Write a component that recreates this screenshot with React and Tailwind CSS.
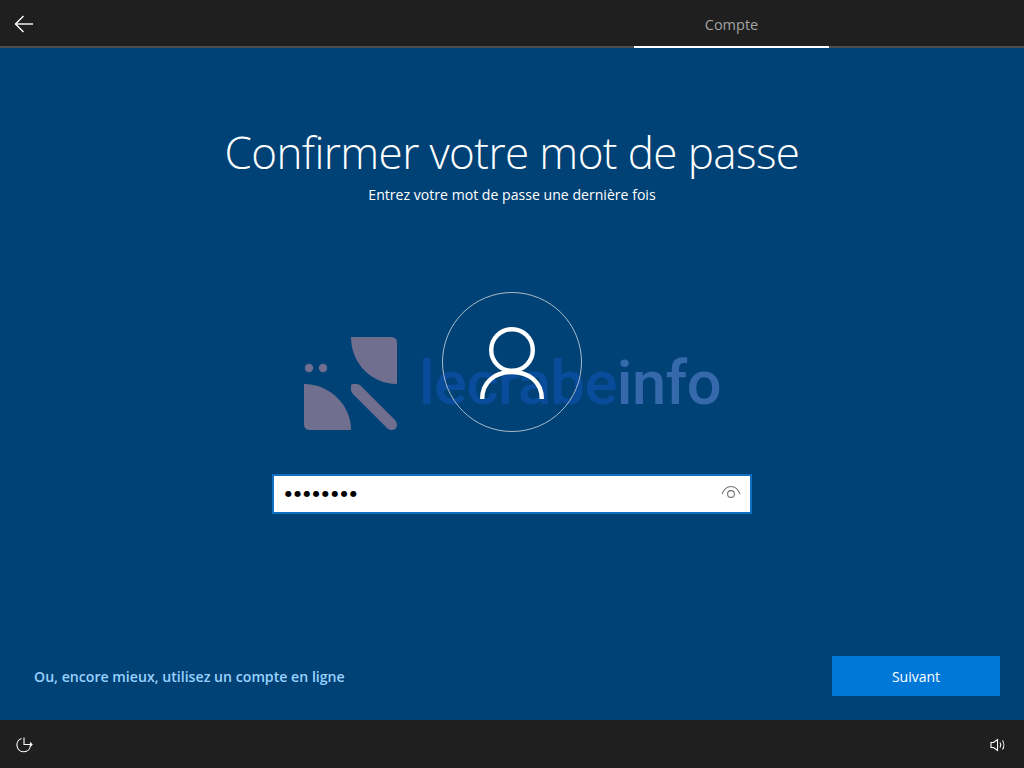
import { useState } from 'react'

const sans = 'font-["Open_Sans","Noto_Sans",sans-serif]'

// ── Watermark behind the page content ───────────────────────────────────────
function Watermark() {
  return (
    <div className="absolute left-[304px] top-[337px] flex items-center pointer-events-none">
      <svg width="94" height="94" viewBox="0 0 94 94" fill="#716f8f">
        <path d="M47 0H87Q93 0 93 6V47C67 47 47 26 47 0Z" />
        <path d="M0 47C26 47 47 68 47 93H6Q0 93 0 87Z" />
        <circle cx="5" cy="31" r="4.2" />
        <circle cx="19" cy="31" r="4.2" />
        <path d="M47 49Q47 47 49 47H53Q55 47 57 49L91 83Q93 85 93 88Q93 93 87 93Q85 93 83 91L49 57Q47 55 47 53Z" />
      </svg>
      <div className='ml-[21px] text-[61.5px] leading-none font-medium tracking-[-0.6px] font-["Roboto",sans-serif]'>
        <span className="text-[#0a4c9c]">lecrabe</span>
        <span className="text-[#3669ac]">info</span>
      </div>
    </div>
  )
}

function UserAvatar() {
  return (
    <div className="w-[140px] h-[140px] rounded-full border border-[#a9bccb] flex items-center justify-center">
      <svg width="64" height="72" viewBox="0 0 64 72" fill="none" stroke="#fff" strokeWidth="4.4" className="mt-[2px]">
        <circle cx="32" cy="23" r="20.8" />
        <path d="M2.2 72C2.2 55 15 45 32 45S61.8 55 61.8 72" />
      </svg>
    </div>
  )
}

function PasswordBox() {
  const [shown, setShown] = useState(false)

  return (
    <div className="w-[480px] h-[40px] bg-white border-2 border-[#0f6fc0] flex items-center justify-between pl-[11px] pr-[9px]">
      <span className='text-[8px] leading-none tracking-[2.3px] text-black font-["DejaVu_Sans",sans-serif]'>
        {shown ? 'motdepas' : '●●●●●●●●'}
      </span>
      <button onClick={() => setShown(s => !s)} className="mb-[5px]">
        <svg width="20" height="14" viewBox="0 0 20 14" fill="none" stroke="#707070" strokeWidth="1.1" className="block">
          <path d="M1 9C3 4 6 1.5 10 1.5C14 1.5 17 4 19 9" />
          <circle cx="10" cy="9" r="3.4" />
        </svg>
      </button>
    </div>
  )
}

function EaseIcon() {
  return (
    <svg width="18" height="16" viewBox="0 0 18 16" fill="none" stroke="#fff" strokeWidth="1.1">
      <path d="M6.5 1.5A6.8 6.8 0 1 0 15.5 8.5" />
      <path d="M9 0.5V7.5H17" />
      <path d="M15 5.5L17 7.5L15 9.5" />
    </svg>
  )
}

function SpeakerIcon() {
  return (
    <svg width="16" height="14" viewBox="0 0 16 14" fill="none" stroke="#fff" strokeWidth="1.1">
      <path d="M1 4.5H3.5L7.5 1.5V12.5L3.5 9.5H1Z" />
      <path d="M10 4.5C11 6 11 8 10 9.5" />
      <path d="M12.5 2.5C14.2 5 14.2 9 12.5 11.5" />
    </svg>
  )
}

export default function App() {
  return (
    <div className={`relative w-[1024px] h-[768px] flex flex-col overflow-hidden bg-[#004275] text-white ${sans}`}>
      {/* Top bar */}
      <div className="h-[48px] shrink-0 flex justify-between bg-[#1f1f1f] border-b-2 border-[#4d4d4d]">
        <button className="w-[48px] h-[48px] flex items-center justify-center">
          <svg width="20" height="18" viewBox="0 0 20 18" fill="none" stroke="#fff" strokeWidth="1.4">
            <path d="M19 9H1.5" />
            <path d="M9.5 1L1.5 9L9.5 17" />
          </svg>
        </button>
        <div className="w-[195px] mr-[195px] h-[48px] border-b-2 border-white flex items-center justify-center pt-[3px] text-[14.5px] text-[#a3a3a3]">
          Compte
        </div>
      </div>

      <Watermark />

      {/* Main */}
      <main className="relative flex-1 flex flex-col items-center">
        <h1 className="mt-[72px] text-[44px] leading-[64px] font-light tracking-[-0.6px]">
          Confirmer votre mot de passe
        </h1>
        <p className="text-[14.1px] leading-[22px]">Entrez votre mot de passe une dernière fois</p>

        <div className="mt-[86px]">
          <UserAvatar />
        </div>

        <div className="mt-[42px]">
          <PasswordBox />
        </div>

        <div className="mt-auto mb-[24px] w-full flex items-center justify-between pl-[34px] pr-[24px]">
          <a className="pt-[2px] text-[14.15px] font-semibold text-[#99d1ff]">Ou, encore mieux, utilisez un compte en ligne</a>
          <button className="w-[168px] h-[40px] bg-[#0078d7] text-[14px]">Suivant</button>
        </div>
      </main>

      {/* Bottom bar */}
      <div className="h-[48px] shrink-0 bg-[#1f1f1f] flex items-center justify-between pl-[15px] pr-[18px] pt-[2px]">
        <EaseIcon />
        <SpeakerIcon />
      </div>
    </div>
  )
}
